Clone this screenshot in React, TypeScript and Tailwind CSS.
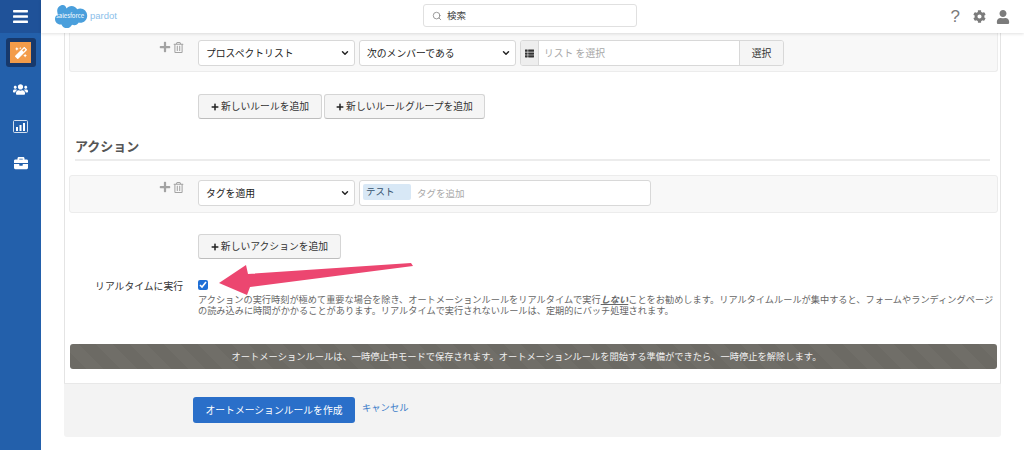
import React from "react";
import { Search, ChevronDown } from "lucide-react";
import {
  FaBars,
  FaBriefcase,
  FaCog,
  FaMagic,
  FaPlus,
  FaRegTrashAlt,
  FaThList,
  FaUser,
  FaUsers,
} from "react-icons/fa";

const Select = ({ label }: { label: string }) => (
  <div className="flex h-[26px] w-[157px] shrink-0 items-center justify-between rounded-[3px] border border-[#d8d8d8] bg-white pl-[7px] pr-[4px] text-[9.8px] text-[#222]">
    <span>{label}</span>
    <ChevronDown size={10} strokeWidth={3.5} className="text-[#222]" />
  </div>
);

const RowTools = () => (
  <div className="flex w-[117px] shrink-0 items-center justify-end gap-[2px] pr-[3px] text-[#a3a3a3]">
    <FaPlus size={12} />
    <FaRegTrashAlt size={11} />
  </div>
);

const AddButton = ({ label, width }: { label: string; width: string }) => (
  <button className={`flex h-[25px] items-center justify-center gap-[2px] rounded-[3px] border border-[#d5d5d5] border-b-[#bdbdbd] bg-[#f5f5f5] text-[9.8px] text-[#333] ${width}`}>
    <FaPlus size={8} className="text-[#222]" />
    {label}
  </button>
);

export default function App() {
  return (
    <div
      className="relative flex h-[450px] w-[1024px] overflow-hidden bg-white"
      style={{ fontFamily: '"Noto Sans CJK JP", "Liberation Sans", sans-serif' }}
    >
      {/* SIDEBAR */}
      <aside className="flex w-[41px] shrink-0 flex-col items-center bg-[#2360ab] text-white">
        <div className="flex h-[33px] w-full items-center justify-center bg-[#1f5299]">
          <FaBars size={17} />
        </div>
        <div className="mt-[5px] flex h-[29px] w-[30px] items-center justify-center rounded-[3px] bg-[#17396c]">
          <div className="flex h-[21px] w-[21px] items-center justify-center bg-[#f39c4a]">
            <FaMagic size={12} />
          </div>
        </div>
        <FaUsers size={15} className="mt-[15px]" />
        <svg width="15" height="13" viewBox="0 0 15 13" className="mt-[23px]">
          <rect x="0.5" y="0.5" width="14" height="12" rx="1" fill="none" stroke="currentColor" opacity="0.8" />
          <path d="M3 7h2v4H3zM6.500 5h2v6h-2zM10 3h2v8h-2z" fill="currentColor" />
        </svg>
        <FaBriefcase size={14} className="mt-[23px]" />
      </aside>

      <div className="flex min-w-0 flex-1 flex-col">
        {/* TOP BAR */}
        <header className="relative z-10 flex h-[33px] shrink-0 items-center bg-white shadow-[0_1px_3px_rgba(0,0,0,0.12)]">
          <svg width="36" height="25" viewBox="0 0 35 25" className="ml-[11px] shrink-0">
            <path
              d="M14 4.500C15.200 3 17 2 19 2c2.500 0 4.600 1.300 5.700 3.300 1-.4 2-.7 3-.7 3.900 0 7 3.200 7 7.100s-3.100 7.100-7 7.100c-.5 0-1-.1-1.400-.2-.9 1.600-2.600 2.600-4.500 2.600-.8 0-1.600-.2-2.300-.5-.9 2-2.900 3.400-5.200 3.400-2.400 0-4.500-1.500-5.300-3.700-.4.100-.7.100-1.100.100-3 0-5.400-2.500-5.400-5.500 0-2 1.100-3.800 2.700-4.800C4.900 8.500 4.700 7.600 4.700 6.800 4.700 3.600 7.300 1 10.500 1c1.400 0 2.600.9 3.500 3.500z"
              fill="#4a9fdc"
            />
            <text x="17.500" y="14" textAnchor="middle" fontSize="6" fill="#fff">salesforce</text>
          </svg>
          <span
            className="ml-[2px] text-[9.500px] text-[#8cc0ea]"
            style={{ fontFamily: '"Liberation Sans", sans-serif' }}
          >
            pardot
          </span>
          <div className="absolute left-[382px] top-[4px] flex h-[23px] w-[214px] items-center rounded-[3px] border border-[#e0e0e0] pl-[8px] text-[9.5px] text-[#444]">
            <Search size={10} className="mr-[5px] text-[#888]" />
            検索
          </div>
          <div className="absolute right-0 top-0 flex h-[33px] items-center text-[#7b7b7b]">
            <span
              className="mr-[13px] text-[17px] leading-none"
              style={{ fontFamily: '"Liberation Sans", sans-serif' }}
            >
              ?
            </span>
            <FaCog size={13} className="mr-[10px]" />
            <FaUser size={14} className="mr-[14px]" />
          </div>
        </header>

        {/* PAGE */}
        <div className="ml-[23px] w-[937px]">
          <div className="h-[350px] border-x border-[#e4e4e4] bg-white px-[4px]">
            <div className="flex h-[39px] w-[929px] items-start rounded-b-[3px] border border-t-0 border-[#ececec] bg-[#f8f8f8] pt-[7px]">
              <div className="flex h-[14px] items-center">
                <RowTools />
              </div>
              <div className="ml-[11px] flex gap-[4px]">
                <Select label="プロスペクトリスト" />
                <Select label="次のメンバーである" />
                <div className="flex h-[26px] w-[264px] overflow-hidden rounded-[3px] border border-[#d8d8d8] bg-white text-[9.8px]">
                  <div className="flex w-[18px] items-center justify-center border-r border-[#d8d8d8] bg-[#eeeeee] text-[#333]">
                    <FaThList size={9} />
                  </div>
                  <div className="flex flex-1 items-center pl-[5px] text-[#a8a8a8]">リスト を選択</div>
                  <div className="flex w-[44px] items-center justify-center border-l border-[#d8d8d8] bg-[#f5f5f5] text-[#333]">選択</div>
                </div>
              </div>
            </div>

            <div className="ml-[129px] mt-[22px] flex gap-[2px]">
              <AddButton label="新しいルールを追加" width="w-[124px]" />
              <AddButton label="新しいルールグループを追加" width="w-[161px]" />
            </div>

            <h2 className="ml-[6px] mt-[17px] h-[25px] w-[915px] border-b-2 border-[#ececec] text-[13px] font-bold leading-[19px] text-[#555]">
              アクション
            </h2>

            <div className="mt-[14px] flex h-[38px] w-[929px] items-start rounded-[3px] border border-[#ececec] bg-[#f8f8f8] pt-[4px]">
              <div className="flex h-[14px] items-center">
                <RowTools />
              </div>
              <div className="ml-[11px] flex gap-[4px]">
                <Select label="タグを適用" />
                <div className="flex h-[26px] w-[292px] items-center rounded-[3px] border border-[#d8d8d8] bg-white pl-[3px] text-[9.5px]">
                  <span className="mb-[3px] h-[16px] w-[48px] rounded-[2px] bg-[#d8e8f6] pl-[3px] leading-[14px] text-[#33506b]">テスト</span>
                  <span className="ml-[6px] text-[#a8a8a8]">タグを追加</span>
                </div>
              </div>
            </div>

            <div className="ml-[129px] mt-[21px]">
              <AddButton label="新しいアクションを追加" width="w-[143px]" />
            </div>

            <div className="mt-[19px] flex">
              <label className="w-[114px] shrink-0 pt-[1px] text-right text-[9.8px] leading-[14px] text-[#333]">
                リアルタイムに実行
              </label>
              <div className="ml-[15px] w-[797px]">
                <input type="checkbox" defaultChecked className="mt-[2px] block h-[10px] w-[10px] accent-[#1f6fd6]" />
                <p className="mt-[4px] text-[9.2px] leading-[11px] text-[#666]">
                  アクションの実行時刻が極めて重要な場合を除き、オートメーションルールをリアルタイムで実行
                  <b className="italic underline">しない</b>
                  ことをお勧めします。リアルタイムルールが集中すると、フォームやランディングページの読み込みに時間がかかることがあります。リアルタイムで実行されないルールは、定期的にバッチ処理されます。
                </p>
              </div>
            </div>

            <div className="ml-[1px] mt-[28px] flex h-[25px] w-[927px] items-center justify-center rounded-[3px] bg-[#6d6b65] bg-[repeating-linear-gradient(45deg,#6c6a64_0px,#6c6a64_12px,#706e68_12px,#706e68_24px)] pr-[14px] text-[9.25px] text-[#f0f0f0]">
              オートメーションルールは、一時停止中モードで保存されます。オートメーションルールを開始する準備ができたら、一時停止を解除します。
            </div>
          </div>

          <footer className="flex h-[54px] items-start rounded-b-[3px] border-t border-[#e8e8e8] bg-[#f3f3f3] pl-[129px] pt-[13px]">
            <button className="h-[26px] w-[162px] rounded-[3px] bg-[#2a6fc9] text-[9.8px] text-white">
              オートメーションルールを作成
            </button>
            <a className="ml-[7px] mt-[4px] text-[9.3px] text-[#3b7cc9]">キャンセル</a>
          </footer>
        </div>
      </div>

      {/* annotation arrow */}
      <svg width="1024" height="450" className="pointer-events-none absolute left-0 top-0">
        <path d="M219 283L246 265L248 274L411 263L413 266L250 287L247 295Z" fill="#ec4670" />
      </svg>
    </div>
  );
}
